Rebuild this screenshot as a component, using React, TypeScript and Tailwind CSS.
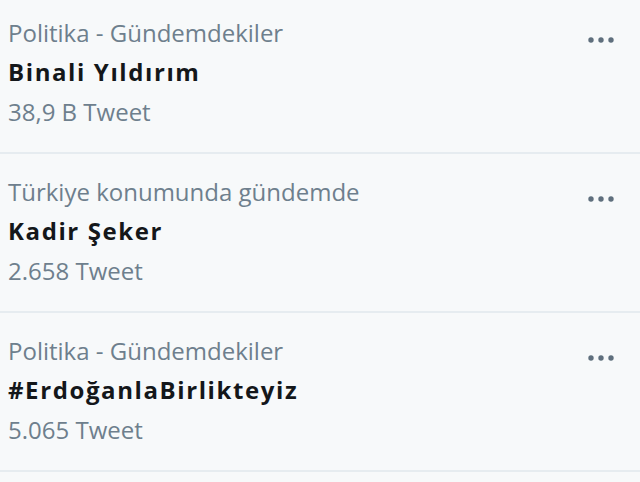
const trends = [
  { context: 'Politika - Gündemdekiler', title: 'Binali Yıldırım', count: '38,9 B Tweet' },
  { context: 'Türkiye konumunda gündemde', title: 'Kadir Şeker', count: '2.658 Tweet' },
  { context: 'Politika - Gündemdekiler', title: '#ErdoğanlaBirlikteyiz', count: '5.065 Tweet' },
];

function MoreIcon() {
  return (
    <svg width="28" height="8" viewBox="0 0 28 8" className="text-[#5f6f7d]">
      <circle cx="4" cy="4" r="2.7" fill="currentColor" />
      <circle cx="14" cy="4" r="2.7" fill="currentColor" />
      <circle cx="24" cy="4" r="2.7" fill="currentColor" />
    </svg>
  );
}

export default function App() {
  return (
    <div className="w-[640px] h-[482px] overflow-hidden bg-[#f7f9fa] font-['Open_Sans',sans-serif]">
      <div className="-mt-[5px]">
        {trends.map((t, i) => (
          <div key={i} className="flex justify-between pl-2 pr-[25px] pt-[18px] pb-[19px] border-b-2 border-[#e6ecf0]">
            <div className="flex flex-col">
              <span className="text-[24px] leading-[40px] text-[#6e7f8d]">{t.context}</span>
              <span className="text-[24px] leading-[38px] font-bold tracking-[1.6px] text-[#14171a]">{t.title}</span>
              <span className="text-[24px] leading-[42px] text-[#6e7f8d]">{t.count}</span>
            </div>
            <div className="pt-[23px]">
              <MoreIcon />
            </div>
          </div>
        ))}
      </div>
    </div>
  );
}
